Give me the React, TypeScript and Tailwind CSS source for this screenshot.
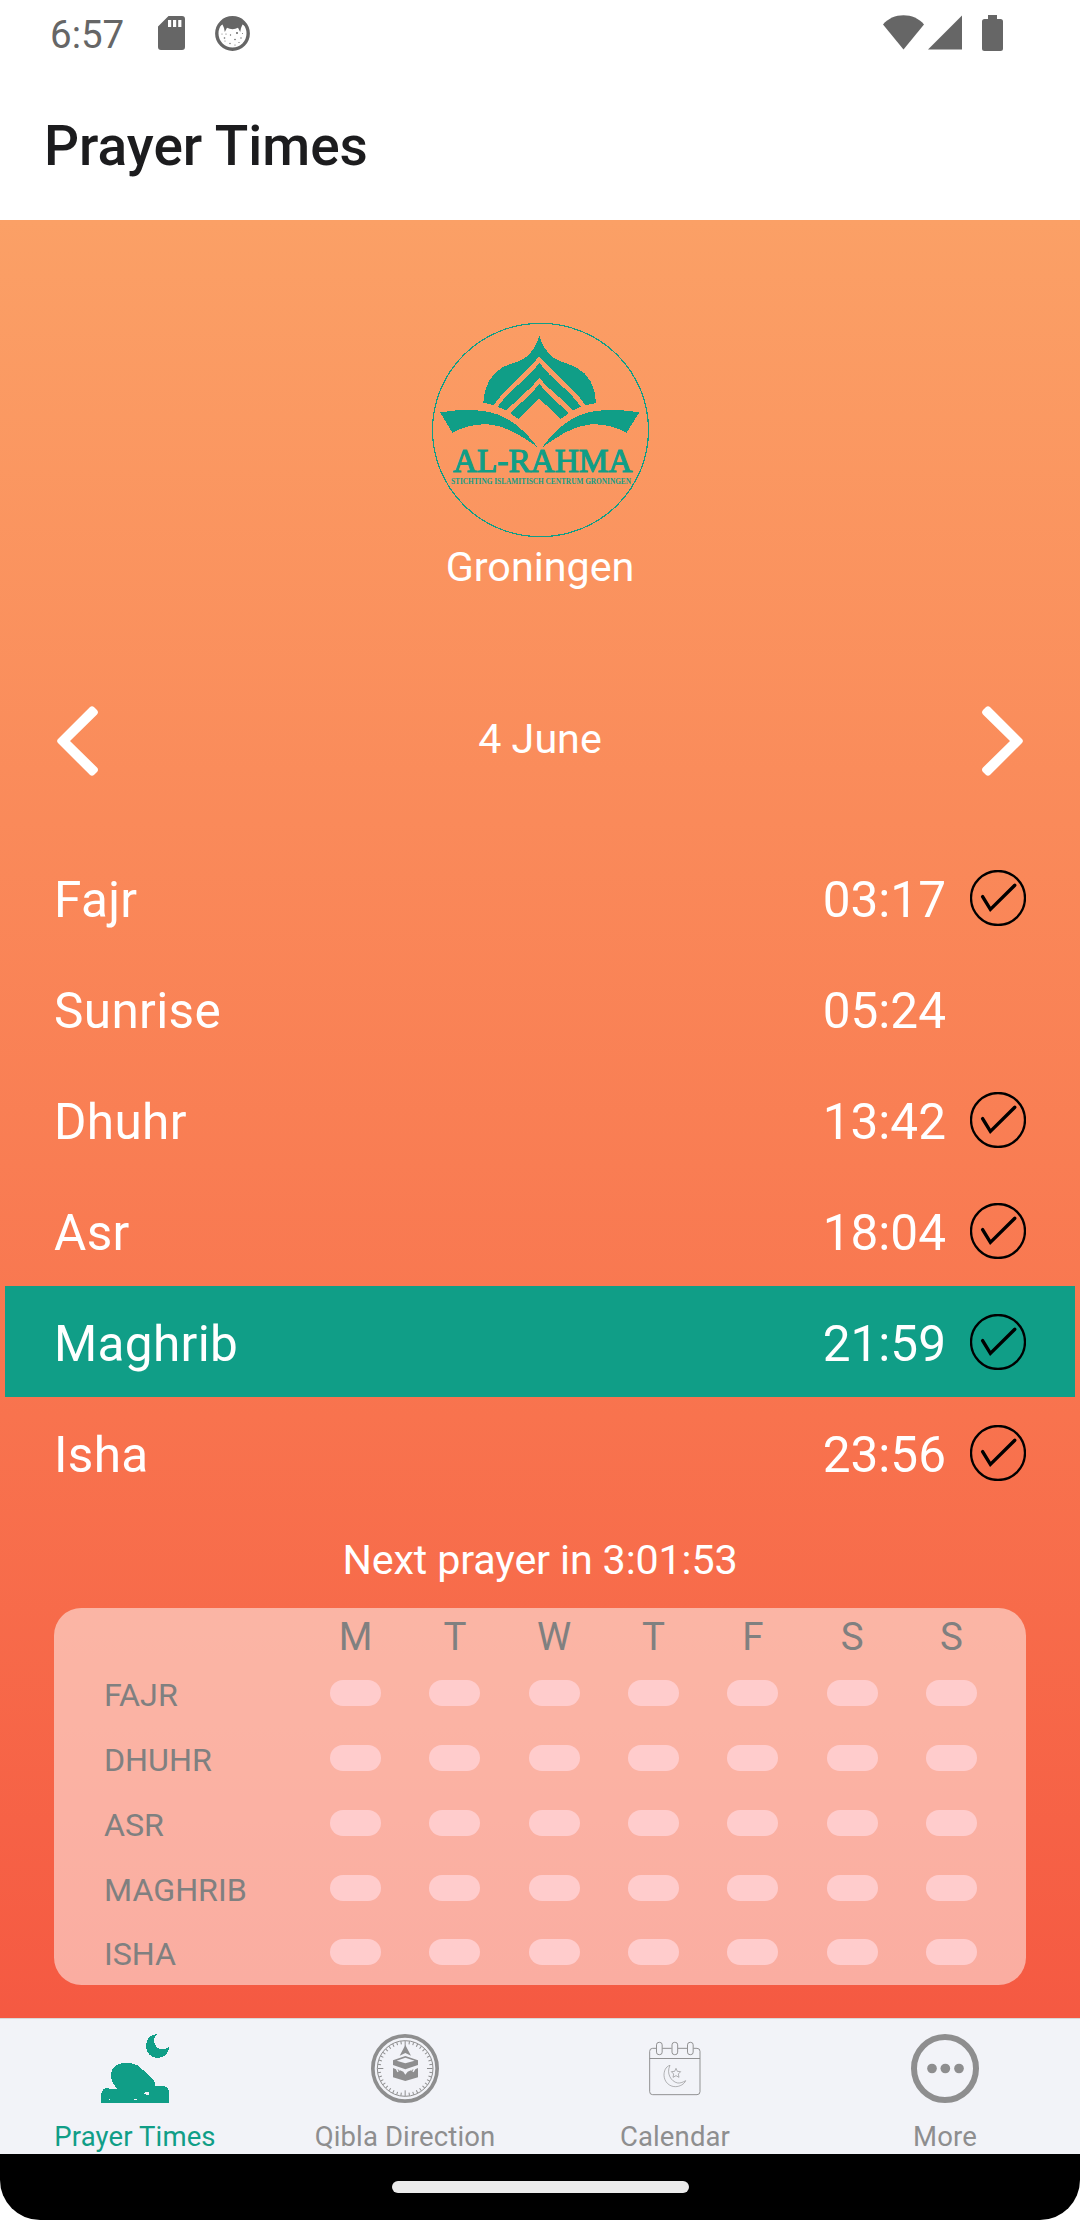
const prayers = [
  { name: 'Fajr', time: '03:17', check: true },
  { name: 'Sunrise', time: '05:24', check: false },
  { name: 'Dhuhr', time: '13:42', check: true },
  { name: 'Asr', time: '18:04', check: true },
  { name: 'Maghrib', time: '21:59', check: true, active: true },
  { name: 'Isha', time: '23:56', check: true },
];

const days = ['M', 'T', 'W', 'T', 'F', 'S', 'S'];
const tracked = ['FAJR', 'DHUHR', 'ASR', 'MAGHRIB', 'ISHA'];

function SdCardIcon() {
  return (
    <svg className="h-[34px] w-[27px]" viewBox="0 0 27 34" fill="#666666">
      <path
        fillRule="evenodd"
        d="M10.5 0H24a3 3 0 0 1 3 3v28a3 3 0 0 1-3 3H3a3 3 0 0 1-3-3V10.5zM10 4v7h3.2V4zM15 4v7h3.2V4zM20.2 4v7h3.2V4z"
      />
    </svg>
  );
}

function CatIcon() {
  return (
    <svg className="h-[35px] w-[35px]" viewBox="0 0 35 35" fill="#666666">
      <circle cx="17.5" cy="17.5" r="15.7" fill="none" stroke="#666666" strokeWidth="3.4" />
      <path d="M4 10.5A15 15 0 0 1 31 10.5L27.5 8.5 26 12l-.8 4-2.2-4.2C19.5 13.6 15.5 13.6 12 11.8L9.8 16 9 12 7.5 8.5z" />
      <g>
        <circle cx="9.5" cy="22" r=".8" />
        <circle cx="15.5" cy="19" r=".7" />
        <circle cx="22" cy="17" r="1" />
        <circle cx="26" cy="22" r=".7" />
        <circle cx="20" cy="23.5" r=".8" />
        <circle cx="15" cy="27.5" r=".7" />
        <circle cx="11" cy="18" r=".6" />
        <circle cx="7" cy="18" r=".5" />
        <circle cx="27.5" cy="17.5" r=".5" />
        <circle cx="20" cy="29" r=".6" />
        <circle cx="10" cy="25" r=".5" />
        <circle cx="24" cy="26.5" r=".6" />
      </g>
    </svg>
  );
}

function StatusIcons() {
  return (
    <div className="flex items-start text-[#666666]">
      <svg className="h-[35px] w-[41px]" viewBox="0 0 41 35" fill="currentColor">
        <path d="M20.5 34.5L0 9.5C5 3.5 12.5.3 20.5.3S36 3.5 41 9.5z" />
      </svg>
      <svg className="ml-[4px] h-[35px] w-[34px]" viewBox="0 0 34 35" fill="currentColor">
        <path d="M34 .5v34H0z" />
      </svg>
      <svg className="ml-[20px] h-[36px] w-[21px]" viewBox="0 0 21 36" fill="currentColor">
        <path d="M6 0h9v4h3.5A2.5 2.5 0 0 1 21 6.5v27a2.5 2.5 0 0 1-2.5 2.5h-16A2.5 2.5 0 0 1 0 33.5v-27A2.5 2.5 0 0 1 2.5 4H6z" />
      </svg>
    </div>
  );
}

function Logo() {
  return (
    <svg className="h-[216px] w-[218px] shrink-0 overflow-visible" viewBox="33 36 654 648" fill="#109e87">
      <g shapeRendering="crispEdges">
        <ellipse cx="361.5" cy="360" rx="324" ry="320" fill="none" stroke="#109e87" strokeWidth="3.6" />
        <path d="M358 76C366 104 378 124 396 140C416 156 440 158 468 172C506 192 526 226 528 279L497 286C466 236 404 194 358 139C312 194 254 236 221 285L190 278C192 226 214 192 248 172C276 158 302 156 320 140C338 124 350 104 358 76Z" />
        <path d="M358 159C394 208 450 240 483 290L458 302C432 268 386 240 358 204C330 240 290 268 259 302L233 290C268 240 322 208 358 159Z" />
        <path d="M358 221C382 256 418 280 446 310L421 328C404 304 376 286 358 266C340 286 314 304 296 328L271 310C298 280 334 256 358 221Z" />
        <path d="M60 307C110 299 150 298 190 303C262 312 312 358 354 413C308 380 262 348 205 343C168 341 132 350 97 368Z" />
        <path d="M658 307C608 299 568 298 528 303C456 312 406 358 366 413C412 380 456 348 513 343C550 341 586 350 620 368Z" />
      </g>
      <text
        x="99"
        y="486"
        textLength="538"
        lengthAdjust="spacing"
        fontFamily="Liberation Serif, serif"
        fontSize="100"
        stroke="#109e87"
        strokeWidth="3.5"
      >
        AL-RAHMA
      </text>
      <text
        x="93"
        y="523"
        textLength="540"
        lengthAdjust="spacingAndGlyphs"
        fontFamily="Liberation Serif, serif"
        fontWeight="700"
        fontSize="22"
      >
        STICHTING ISLAMITISCH CENTRUM GRONINGEN
      </text>
    </svg>
  );
}

function Chevron({ flip = false }: { flip?: boolean }) {
  return (
    <svg className={flip ? 'h-[70px] w-[41px] rotate-180' : 'h-[70px] w-[41px]'} viewBox="0 0 41 70" fill="#ffffff">
      <path d="M1 33L32.8 1.2Q35 -.8 37.2 1.2L40 4Q42 6.3 40 8.5L13 35L40 61.5Q42 63.7 40 66L37.2 68.8Q35 70.8 32.8 68.8L1 37Q-.8 35 1 33Z" />
    </svg>
  );
}

function CheckCircle() {
  return (
    <svg className="h-[56px] w-[56px]" viewBox="0 0 56 56" fill="none" stroke="#000000">
      <circle cx="28" cy="28" r="27" strokeWidth="2.3" />
      <path d="M12.6 26.6L20.4 39.4L44.8 15.2" strokeWidth="3.4" strokeLinecap="round" />
    </svg>
  );
}

function PrayerIcon() {
  return (
    <svg className="h-[69px] w-[68px]" viewBox="183 72 204 207" fill="currentColor" shapeRendering="crispEdges">
      <path d="M351 72C338 84 341 102 350 111C360 121 377 120 387 110C388 130 372 144 353 144C333 144 318 128 318 108C318 88 332 72 351 72Z" />
      <path
        fillRule="evenodd"
        d="M183 279V258C184 242 190 235 201 234C206 237 210 235 216 237H231C222 224 213 212 213 195C213 179 222 167 238 162C250 157 264 160 276 160C288 162 298 169 308 179L340 208C345 214 345 221 346 228H371C382 230 387 237 387 248V279ZM310 248L328 246V254L320 256ZM280 268L290 266V270H282ZM206 268H211V271H206Z"
      />
    </svg>
  );
}

function QiblaIcon() {
  const ticks = Array.from({ length: 40 }, (_, i) => i * 9);
  return (
    <svg className="h-[69px] w-[68px]" viewBox="993 72 204 207" fill="currentColor">
      <g fill="none" stroke="currentColor">
        <ellipse cx="1095" cy="175.5" rx="96.5" ry="98" strokeWidth="11" />
        <circle cx="1095.5" cy="175.5" r="83.5" strokeWidth="3" />
        {ticks.map((angle) => (
          <path
            key={angle}
            d={angle % 90 === 0 ? 'M1095.5 93v17' : 'M1095.5 93v9'}
            strokeWidth="3"
            transform={`rotate(${angle} 1095.5 175.5)`}
          />
        ))}
      </g>
      <path d="M1096 105L1113 137L1096 129L1079 137Z" />
      <path fillRule="evenodd" d="M1096 138L1134 151V165L1096 178L1059 165V151ZM1096 143L1070 152L1096 160L1124 152Z" />
      <path d="M1059 174L1068 178L1072 187L1080 181L1090 185L1096 194L1103 185L1113 181L1121 187L1126 178L1134 174V202L1096 213L1059 202Z" />
      <path d="M1072 178L1078 180L1076 184ZM1121 178L1115 180L1117 184Z" />
    </svg>
  );
}

function CalendarIcon() {
  return (
    <svg
      className="h-[69px] w-[68px]"
      viewBox="245 72 204 207"
      fill="none"
      stroke="currentColor"
      strokeWidth="2.9"
    >
      <path d="M291 115H280Q271 115 271 124V245Q271 254 280 254H413Q422 254 422 245V124Q422 115 413 115H402M384 115H356M337 115H309M271 145.5H422" />
      <rect x="291.5" y="97" width="17" height="37" rx="7.5" />
      <rect x="338" y="97" width="17" height="37" rx="7.5" />
      <rect x="384.5" y="97" width="17" height="37" rx="7.5" />
      <path
        strokeWidth="2"
        d="M332 166C318 170 314 184 314 196C315 216 330 230 348 230C362 230 375 222 379 212C372 216 364 220 355 219C335 215 320 190 332 166Z"
      />
      <path
        strokeWidth="2"
        d="M350 175L354 184L364 185L357 192L359 202L350 197L341 202L343 192L336 185L346 184Z"
      />
    </svg>
  );
}

function MoreIcon() {
  return (
    <svg className="h-[69px] w-[68px]" viewBox="1053 72 204 207" fill="currentColor">
      <ellipse cx="1155" cy="175.5" rx="93" ry="94.5" fill="none" stroke="currentColor" strokeWidth="18" />
      <circle cx="1116" cy="175.5" r="14.5" />
      <circle cx="1156" cy="175.5" r="14.5" />
      <circle cx="1197" cy="175.5" r="14.5" />
    </svg>
  );
}

const tabs = [
  { label: 'Prayer Times', Icon: PrayerIcon, active: true },
  { label: 'Qibla Direction', Icon: QiblaIcon },
  { label: 'Calendar', Icon: CalendarIcon },
  { label: 'More', Icon: MoreIcon },
];

export default function App() {
  return (
    <div className="flex h-[2220px] w-[1080px] flex-col overflow-hidden bg-white font-['Roboto',sans-serif]">
      <div className="flex h-[72px] items-start pr-[77px] pl-[50px] pt-[15px]">
        <div className="h-[40px] w-[108px] text-[38.5px] leading-[40px] text-[#666666]">6:57</div>
        <div className="mt-px flex flex-1 gap-[30px]">
          <SdCardIcon />
          <CatIcon />
        </div>
        <StatusIcons />
      </div>
      <header className="flex h-[148px] items-center px-[44px]">
        <h1 className="text-[55px] font-medium leading-[64px] text-[#1c1c1e]">Prayer Times</h1>
      </header>

      <main className="flex h-[1798px] flex-col bg-linear-to-b from-[#fba066] to-[#f55942] pt-[102px] text-white">
        <div className="flex flex-col items-center">
          <Logo />
          <div className="text-[41.25px] leading-[58px]">Groningen</div>
        </div>

        <div className="mt-[95px] flex h-[100px] items-center justify-between px-[57px]">
          <Chevron />
          <div className="pb-[5px] text-[41.25px] leading-[50px]">4 June</div>
          <Chevron flip />
        </div>

        <div className="mt-[51px] px-[5px]">
          {prayers.map((p) => (
            <div
              key={p.name}
              className={
                p.active
                  ? 'flex h-[111px] items-center bg-[#109e87] px-[49px]'
                  : 'flex h-[111px] items-center px-[49px]'
              }
            >
              <div className="flex-1 pt-[5px] text-[49.5px] leading-[60px] tracking-[0.35px]">{p.name}</div>
              <div className="pt-[5px] text-[49.5px] leading-[60px]">{p.time}</div>
              <div className="ml-[24px] h-[56px] w-[56px]">{p.check && <CheckCircle />}</div>
            </div>
          ))}
        </div>

        <div className="h-[100px] pt-[4px] text-center text-[41.25px] leading-[97px] tracking-[-0.15px]">
          Next prayer in 3:01:53
        </div>

        <section className="mx-[54px] h-[377px] rounded-[27.5px] bg-white/50 pr-[25px] pl-[49px] text-[#808080]">
          <div className="grid h-[53px] grid-cols-[203px_repeat(7,1fr)] items-center pt-[4px] text-center text-[38.5px] leading-[46px]">
            <span />
            {days.map((d, i) => (
              <span key={i}>{d}</span>
            ))}
          </div>
          {tracked.map((name) => (
            <div key={name} className="grid h-[64.75px] grid-cols-[203px_repeat(7,1fr)] items-center">
              <span className="pt-[4px] pl-px text-[32.2px] leading-[40px]">{name}</span>
              {days.map((_, i) => (
                <span key={i} className="mx-auto h-[26px] w-[51px] rounded-full bg-[#ffcccc]" />
              ))}
            </div>
          ))}
        </section>
      </main>

      <nav className="grid h-[136px] grid-cols-4 border-t border-[#d8d8d8] bg-[#f2f3f8] pt-[15px]">
        {tabs.map(({ label, Icon, active }) => (
          <div
            key={label}
            className={
              active
                ? 'flex flex-col items-center text-[#109e87]'
                : 'flex flex-col items-center text-[#8e8e8f]'
            }
          >
            <Icon />
            <span className="mt-[18px] text-[27.5px] leading-[32px] tracking-[0.12px]">{label}</span>
          </div>
        ))}
      </nav>

      <footer className="flex h-[66px] items-start justify-center rounded-b-[40px] bg-black pt-[27px]">
        <div className="h-[12px] w-[297px] rounded-full bg-[#ebebeb]" />
      </footer>
    </div>
  );
}
